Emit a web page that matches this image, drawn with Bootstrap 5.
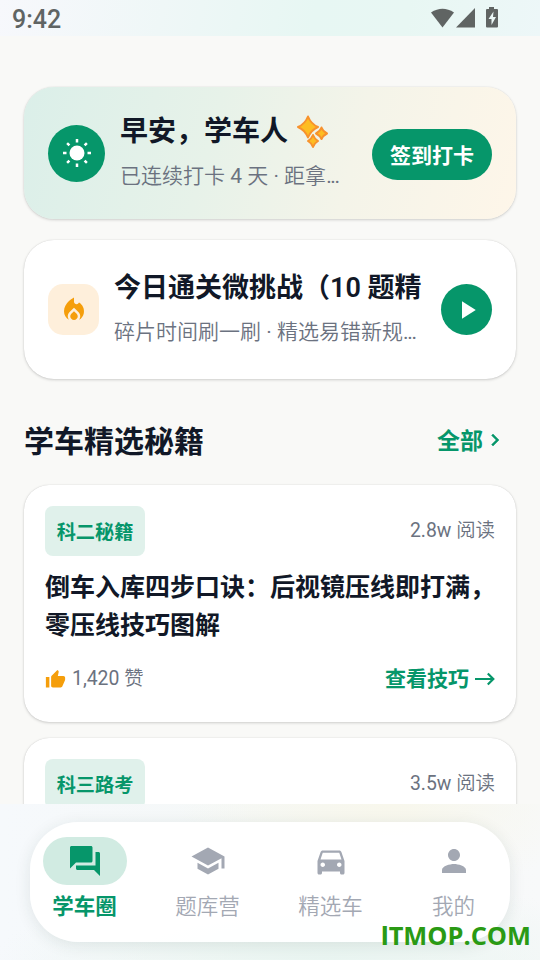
<!DOCTYPE html>
<html lang="zh-CN">
<head>
<meta charset="utf-8">
<meta name="viewport" content="width=device-width, initial-scale=1">
<title>学车圈</title>
<link href="https://cdn.jsdelivr.net/npm/bootstrap@5.3.0/dist/css/bootstrap.min.css" rel="stylesheet">
<style>
  :root { --brand: #06966a; --ink: #111827; --muted2: #6b7280; --amber: #f59e0b; }
  body { font-family: Roboto, "Noto Sans CJK SC", sans-serif; background: #f9f9f7; color: var(--ink); }
  svg { display: block; flex: none; }
  svg:not([fill]) { fill: currentColor; }
  .phone { width: 540px; height: 960px; }
  .statusbar { height: 36px; padding: 2px 41px 0 12px; color: #606463; font-size: 25px; font-weight: 500; line-height: 36px;
    background: linear-gradient(100deg, #f7f8fc 0%, #eff7f7 30%, #e7f7f3 58%, #e8f7f3 75%, #edf7f8 100%); }
  .statusbar svg { margin-top: 5px; }
  .feed { padding: 51px 24px 0; min-height: 0; }
  .panel { background: #fff; border: 0; border-radius: 30px; box-shadow: 0 1px 3px rgba(0,0,0,.17), 0 0 1px rgba(0,0,0,.16); flex: none; }
  .hello { height: 132px; padding: 0 24px; gap: 15px; background: linear-gradient(105deg, #dbefe9 0%, #e7f2e9 38%, #f4f4e9 66%, #fef6e9 100%); }
  .quiz { height: 139px; margin-top: 21px; padding: 0 24px; gap: 15px; }
  .disc { width: 57px; height: 57px; }
  .play { width: 51px; height: 51px; }
  .brand-bg { background: var(--brand); color: #fff; }
  .brand-fg { color: var(--brand); }
  .flame { width: 51px; height: 51px; border-radius: 15px; background: #feefdb; color: var(--amber); }
  .h-hello { font-size: 28px; line-height: 40px; font-weight: 600; }
  .h-hello svg { margin-bottom: 1px; }
  .h-quiz { font-size: 27px; line-height: 40px; font-weight: 600; }
  .sub, .meta, .tab { font-family: Roboto, "Noto Sans CJK SC DemiLight", "Noto Sans CJK SC Light", "Noto Sans CJK SC", sans-serif; font-weight: 400; }
  .sub { font-size: 21px; line-height: 32px; color: var(--muted2); margin-top: 8px; }
  .dots { letter-spacing: -1.3px; }
  .text-col { padding-bottom: 3px; }
  .checkin { width: 120px; height: 51px; font-size: 21px; font-weight: 600; line-height: 53px; padding: 0; margin-top: 2px; }
  .section-head { height: 106px; padding-top: 20px; flex: none; }
  .section-head h2 { font-size: 30px; font-weight: 600; line-height: 44px; }
  .all-link { font-size: 23px; font-weight: 600; line-height: 36px; padding-right: 9px; }
  .all-link svg { margin-bottom: 5px; }
  .tip { height: 237px; border-radius: 25px; padding: 21px; margin-bottom: 16px; }
  .tag { height: 50px; width: 100px; border-radius: 8px; background: #e0f1eb; color: var(--brand); font-size: 19.2px; font-weight: 600; line-height: 53px; }
  .meta { font-size: 19.4px; color: var(--muted2); line-height: 28px; }
  .tip h3 { font-size: 25px; line-height: 37.5px; font-weight: 600; margin: 13px 0 0; }
  .foot { margin-top: 20px; }
  .foot .meta svg { margin: 0 6px 0 0; }
  .more { font-size: 21px; font-weight: 600; line-height: 30px; }
  .more svg { margin-left: 5px; }
  .dock { height: 156px; padding: 18px 30px; position: relative;
    background: radial-gradient(ellipse 210px 90px at 72% 0, #f8f7ec 0, rgba(248,247,236,0) 100%),
      radial-gradient(ellipse 330px 80px at 60% 100%, #e9f5f1 0, rgba(233,245,241,0) 100%),
      linear-gradient(90deg, #f6f9fc, #f5f8f6 60%, #f8f9fa); }
  .tabs { height: 120px; border-radius: 48px; padding: 15px 14px 0 13px; background: rgba(255,255,255,.94); box-shadow: 0 3px 16px rgba(30,60,50,.10); }
  .tab { width: 84px; font-size: 21.5px; line-height: 32px; color: #a3a8b3; }
  .pill { width: 84px; height: 48px; border-radius: 24px; }
  .tab.on { color: var(--brand); font-family: Roboto, "Noto Sans CJK SC", sans-serif; font-weight: 600; }
  .tab.on .pill { background: #d1ebe2; }
  .tab span { margin: 6px 1px 0 0; }
  .watermark { position: absolute; right: 9px; bottom: 7px; color: #2a9a14; font: 700 25.4px/34px "Open Sans", "Noto Sans", sans-serif; }
  .watermark .bar-i { font-family: Roboto, sans-serif; font-weight: 800; }
</style>
</head>
<body>
<div class="phone d-flex flex-column overflow-hidden">
  <header class="statusbar d-flex justify-content-between flex-shrink-0">
    <span>9:42</span>
    <svg width="68" height="22" viewBox="0 0 68 22">
      <path d="M0 5.500Q11.500-2 23 5.500L11.500 20.500Z"/><path d="M25 20.500 44 1V20.500Z"/>
      <path fill-rule="evenodd" d="M58 0h5v2h3a1 1 0 0 1 1 1v16.500a1 1 0 0 1-1 1H56a1 1 0 0 1-1-1V3a1 1 0 0 1 1-1h2ZM62.500 4.500 57.500 12h3v6l4.500-8h-3Z"/>
    </svg>
  </header>

  <main class="feed d-flex flex-column flex-grow-1 overflow-hidden">
    <section class="panel hello d-flex align-items-center">
      <div class="disc brand-bg rounded-circle d-flex align-items-center justify-content-center flex-shrink-0">
        <svg width="30" height="30" viewBox="-15 -15 30 30"><circle r="7.500"/>
          <g stroke="#fff" stroke-width="2.500"><path d="M0-14v3.500M0 10.500v3.500M-14 0h3.500M10.500 0h3.500M-9.900-9.900l2.300 2.300M7.600 7.600l2.300 2.300M-9.900 9.900l2.300-2.300M7.600-7.600l2.300-2.300"/></g></svg>
      </div>
      <div class="text-col flex-grow-1 overflow-hidden">
        <div class="h-hello d-flex align-items-center">早安，学车人
          <svg class="ms-2" width="34" height="34" viewBox="0 0 34 34" fill="#fdbd22" stroke="#f7922d" stroke-width="2" stroke-linejoin="round">
            <path d="M12 2.500Q15 10 22 13Q15 16 12 23.500Q9 16 2 13Q9 10 12 2.500Z"/><path d="M25.500 13.500Q27 17.500 31 19.500Q27 21.500 25.500 25Q24 21.500 20 19.500Q24 17.500 25.500 13.500Z"/><path d="M17 21Q18.500 25 22 27Q18.500 29 17 33Q15.500 29 12 27Q15.500 25 17 21Z"/></svg>
        </div>
        <div class="sub text-nowrap">已连续打卡 4 天 · 距拿<span class="dots">...</span></div>
      </div>
      <button class="btn brand-bg checkin rounded-pill flex-shrink-0">签到打卡</button>
    </section>

    <section class="panel quiz d-flex align-items-center">
      <div class="flame d-flex align-items-center justify-content-center flex-shrink-0">
        <svg width="30" height="30" viewBox="0 0 24 24"><path d="M16 6l-.44.55C14.380 8.020 12 7.190 12 5.300V2S4 6 4 13c0 2.920 1.560 5.470 3.890 6.860-.56-.79-.89-1.760-.89-2.800 0-1.320.52-2.560 1.470-3.500L12 10.100l3.530 3.470c.95.93 1.470 2.170 1.470 3.500 0 1.020-.31 1.960-.85 2.750 1.890-1.150 3.290-3.060 3.710-5.300.66-3.550-1.070-6.900-3.860-8.520zM12 12.900l-2.130 2.090C9.310 15.550 9 16.280 9 17.060 9 18.680 10.350 20 12 20s3-1.320 3-2.940c0-.78-.31-1.520-.87-2.070L12 12.900z"/></svg>
      </div>
      <div class="text-col flex-grow-1 overflow-hidden">
        <div class="h-quiz text-nowrap">今日通关微挑战（10 题精</div>
        <div class="sub text-nowrap">碎片时间刷一刷 · 精选易错新规<span class="dots">...</span></div>
      </div>
      <div class="play brand-bg rounded-circle d-flex align-items-center justify-content-center flex-shrink-0">
        <svg width="30" height="30" viewBox="0 0 24 24"><path d="M8 5v14l11-7z"/></svg>
      </div>
    </section>

    <div class="section-head d-flex justify-content-between align-items-center">
      <h2 class="m-0">学车精选秘籍</h2>
      <a class="all-link brand-fg text-decoration-none d-flex align-items-center">全部<svg width="24" height="24" viewBox="0 0 24 24" stroke="currentColor" stroke-width=".5"><path d="M10 6L8.590 7.410 13.170 12l-4.580 4.590L10 18l6-6z"/></svg></a>
    </div>

    <article class="panel tip">
      <div class="d-flex justify-content-between align-items-center">
        <span class="tag text-center">科二秘籍</span><span class="meta">2.8w 阅读</span>
      </div>
      <h3 class="text-nowrap">倒车入库四步口诀：后视镜压线即打满，<br>零压线技巧图解</h3>
      <div class="foot d-flex justify-content-between align-items-center">
        <span class="meta d-flex align-items-center"><svg width="21" height="21" viewBox="0 0 24 24" fill="#f59e0b"><path d="M1 21h4V9H1v12zm22-11c0-1.100-.9-2-2-2h-6.310l.95-4.570.03-.32c0-.41-.17-.79-.44-1.060L14.170 1 7.590 7.590C7.220 7.950 7 8.450 7 9v10c0 1.100.9 2 2 2h9c.83 0 1.540-.5 1.840-1.220l3.020-7.050c.09-.23.14-.47.14-.73v-2z"/></svg>1,420 赞</span>
        <span class="more brand-fg d-flex align-items-center">查看技巧<svg width="21" height="14" viewBox="0 0 21 14"><path d="M1 7h18M13.800 1.500 19.300 7 13.800 12.500" fill="none" stroke="currentColor" stroke-width="2.200"/></svg></span>
      </div>
    </article>

    <article class="panel tip">
      <div class="d-flex justify-content-between align-items-center">
        <span class="tag text-center">科三路考</span><span class="meta">3.5w 阅读</span>
      </div>
    </article>
  </main>

  <footer class="dock flex-shrink-0">
    <nav class="tabs d-flex justify-content-between">
      <div class="tab on d-flex flex-column align-items-center">
        <div class="pill d-flex align-items-center justify-content-center"><svg width="36" height="36" viewBox="0 0 24 24"><path d="M21 6h-2v9H6v2c0 .55.45 1 1 1h11l4 4V7c0-.55-.45-1-1-1zm-4 6V3c0-.55-.45-1-1-1H3c-.55 0-1 .45-1 1v14l4-4h10c.55 0 1-.45 1-1z"/></svg></div>
        <span>学车圈</span>
      </div>
      <div class="tab d-flex flex-column align-items-center">
        <div class="pill d-flex align-items-center justify-content-center"><svg width="36" height="36" viewBox="0 0 24 24"><path d="M5 13.180v4L12 21l7-3.820v-4L12 17l-7-3.820zM12 3L1 9l11 6 9-4.910V17h2V9L12 3z"/></svg></div>
        <span>题库营</span>
      </div>
      <div class="tab d-flex flex-column align-items-center">
        <div class="pill d-flex align-items-center justify-content-center"><svg width="36" height="36" viewBox="0 0 24 24"><path d="M18.920 6.010C18.720 5.420 18.160 5 17.500 5h-11c-.66 0-1.210.42-1.420 1.010L3 12v8c0 .55.45 1 1 1h1c.55 0 1-.45 1-1v-1h12v1c0 .55.45 1 1 1h1c.55 0 1-.45 1-1v-8l-2.080-5.990zM6.500 16c-.83 0-1.500-.67-1.500-1.500S5.670 13 6.500 13s1.500.67 1.500 1.500S7.330 16 6.500 16zm11 0c-.83 0-1.500-.67-1.500-1.500s.67-1.500 1.500-1.500 1.500.67 1.500 1.500-.67 1.500-1.500 1.500zM5 11l1.500-4.500h11L19 11H5z"/></svg></div>
        <span>精选车</span>
      </div>
      <div class="tab d-flex flex-column align-items-center">
        <div class="pill d-flex align-items-center justify-content-center"><svg width="36" height="36" viewBox="0 0 24 24"><path d="M12 12c2.210 0 4-1.790 4-4s-1.790-4-4-4-4 1.790-4 4 1.790 4 4 4zm0 2c-2.670 0-8 1.340-8 4v2h16v-2c0-2.660-5.330-4-8-4z"/></svg></div>
        <span>我的</span>
      </div>
    </nav>
    <div class="watermark"><span class="bar-i">I</span>TMOP.COM</div>
  </footer>
</div>
<script src="https://cdn.jsdelivr.net/npm/bootstrap@5.3.0/dist/js/bootstrap.bundle.min.js"></script>
</body>
</html>
